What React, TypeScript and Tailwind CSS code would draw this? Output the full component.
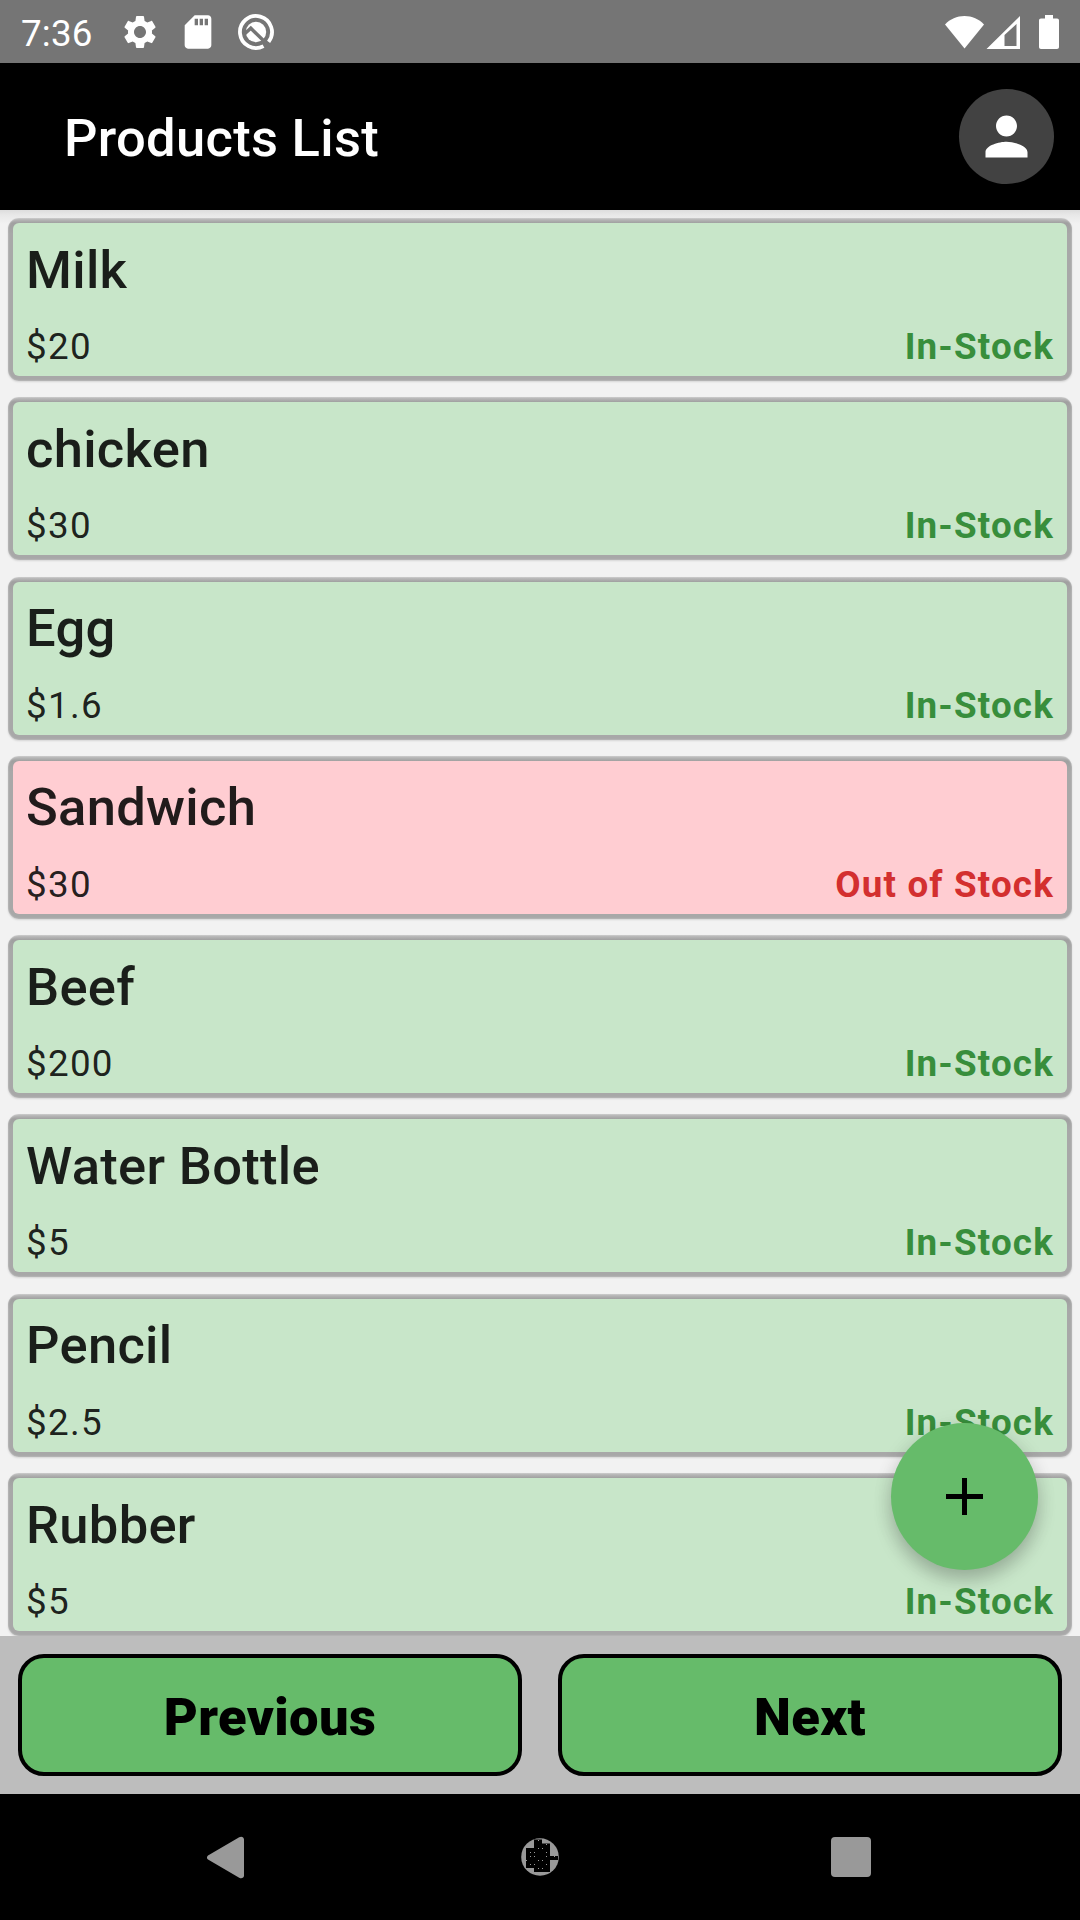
import React from "react";

type Product = { name: string; price: string; inStock: boolean };

const products: Product[] = [
  { name: "Milk", price: "$20", inStock: true },
  { name: "chicken", price: "$30", inStock: true },
  { name: "Egg", price: "$1.6", inStock: true },
  { name: "Sandwich", price: "$30", inStock: false },
  { name: "Beef", price: "$200", inStock: true },
  { name: "Water Bottle", price: "$5", inStock: true },
  { name: "Pencil", price: "$2.5", inStock: true },
  { name: "Rubber", price: "$5", inStock: true },
];

function StatusBar() {
  return (
    <div className="flex h-[63px] shrink-0 items-center bg-[#757575] text-white">
      <span className="ml-[21px] w-[99px] pt-[3px] text-[36.75px] leading-[43px] tracking-[0.2px]">7:36</span>
      <svg className="h-[40px] w-[40px]" viewBox="0 0 24 24" fill="currentColor">
        <path d="M19.14 12.94c.04-.3.06-.61.06-.94 0-.32-.02-.64-.07-.94l2.03-1.58c.18-.14.23-.41.12-.61l-1.92-3.32c-.12-.22-.37-.29-.59-.22l-2.39.96c-.5-.38-1.03-.7-1.62-.94l-.36-2.54c-.04-.24-.24-.41-.48-.41h-3.84c-.24 0-.43.17-.47.41l-.36 2.54c-.59.24-1.13.57-1.62.94l-2.39-.96c-.22-.08-.47 0-.59.22L2.74 8.87c-.12.21-.08.47.12.61l2.03 1.58c-.05.3-.09.63-.09.94s.02.64.07.94l-2.03 1.58c-.18.14-.23.41-.12.61l1.92 3.32c.12.22.37.29.59.22l2.39-.96c.5.38 1.03.7 1.62.94l.36 2.54c.05.24.24.41.48.41h3.84c.24 0 .44-.17.47-.41l.36-2.54c.59-.24 1.13-.56 1.62-.94l2.39.96c.22.08.47 0 .59-.22l1.92-3.32c.12-.22.07-.47-.12-.61l-2.01-1.58zM12 15.6c-1.98 0-3.6-1.62-3.6-3.6s1.62-3.6 3.6-3.6 3.6 1.62 3.6 3.6-1.62 3.6-3.6 3.6z" />
      </svg>
      <svg className="ml-[18px] h-[40px] w-[40px]" viewBox="0 0 24 24" fill="currentColor">
        <path d="M18 2h-8L4.02 8 4 20c0 1.1.9 2 2 2h12c1.1 0 2-.9 2-2V4c0-1.1-.9-2-2-2zm-6 6h-2V4h2v4zm3 0h-2V4h2v4zm3 0h-2V4h2v4z" />
      </svg>
      <svg className="ml-[19px] h-[38px] w-[38px]" viewBox="0 0 38 38" fill="none">
        <path d="M26.500 33.100A16 16 0 1 1 31.600 28.800" stroke="white" strokeWidth="3.8" />
        <circle cx="19" cy="19" r="10.2" fill="white" />
        <path d="M8 20.500 13.800 15.200 29 30" stroke="#757575" strokeWidth="3.4" />
      </svg>
      <div className="ml-auto mr-[20px] flex items-center">
        <svg className="h-[34px] w-[40px]" viewBox="0 0 40 34" fill="currentColor">
          <path d="M20.5 33.5 1 9.5C6 4 13 1 20.5 1S35 4 40 9.5Z" />
        </svg>
        <svg className="ml-[2px] h-[34px] w-[34px]" viewBox="0 0 34 34" fill="currentColor" fillRule="evenodd">
          <path d="M0.5 34 34 1V34ZM18.5 20V31H30.5V9Z" />
        </svg>
        <svg className="ml-[18px] h-[34px] w-[22px]" viewBox="0 0 22 34" fill="currentColor">
          <path d="M7 0h8v3.5h4c1.2 0 2 .8 2 2V32c0 1.200-.8 2-2 2H3c-1.200 0-2-.8-2-2V5.500c0-1.200.8-2 2-2h4Z" />
        </svg>
      </div>
    </div>
  );
}

function AppBar() {
  return (
    <header className="flex h-[147px] shrink-0 items-center justify-between bg-black pl-[64px] pr-[26px] text-white">
      <h1 className="pt-[3px] text-[52.5px] leading-[62px] font-medium tracking-[0.3px]">Products List</h1>
      <button className="mt-[-1px] flex h-[95px] w-[95px] items-center justify-center rounded-full bg-[#424242]">
        <svg className="h-[63px] w-[63px]" viewBox="0 0 24 24" fill="currentColor">
          <path d="M12 12c2.210 0 4-1.790 4-4s-1.790-4-4-4-4 1.790-4 4 1.790 4 4 4zm0 2c-2.670 0-8 1.340-8 4v2h16v-2c0-2.660-5.330-4-8-4z" />
        </svg>
      </button>
    </header>
  );
}

function ProductCard({ product }: { product: Product }) {
  return (
    <li className="h-[163px] shrink-0 rounded-[11px] bg-[linear-gradient(to_bottom,#c2c2c2_0px,#a0a0a0_5px,#a8a8a8_16px)] p-[5px] shadow-[inset_0_0_2px_rgba(255,255,255,0.5),0_1px_2px_rgba(0,0,0,0.12)]">
      <div
        className={
          "flex h-full flex-col justify-between rounded-[6px] px-[13px] " +
          (product.inStock ? "bg-[#c8e6c9]" : "bg-[#ffcdd2]")
        }
      >
        <h2 className="mt-[15.5px] text-[52.5px] leading-[63px] font-medium tracking-[0.3px] text-black/87">
          {product.name}
        </h2>
        <div className="mb-[7px] flex justify-between text-[36.75px] leading-[44px]">
          <span className="tracking-[1.3px] text-black/87">{product.price}</span>
          <span
            className={
              "font-bold tracking-[1.18px] " + (product.inStock ? "text-[#388e3c]" : "text-[#d32f2f]")
            }
          >
            {product.inStock ? "In-Stock" : "Out of Stock"}
          </span>
        </div>
      </div>
    </li>
  );
}

function PagerButton({ label }: { label: string }) {
  return (
    <button className="h-[122px] flex-1 rounded-[26px] border-4 border-black bg-[#66bb6a] pt-[4px] text-[52.5px] leading-[62px] font-black tracking-[0.4px] text-black">
      {label}
    </button>
  );
}

const homeSpecks = [
  [18, 2], [26, 6], [18, 10], [22, 10], [10, 14], [14, 14], [26, 14],
  [10, 18], [14, 18], [26, 18], [34, 18], [18, 22], [22, 22], [6, 22], [10, 26],
  [14, 26], [26, 26], [18, 30], [22, 30],
];

function NavigationBar() {
  return (
    <nav className="flex h-[126px] shrink-0 items-center justify-between bg-black pl-[206px] pr-[209px] text-[#999999]">
      <svg className="h-[43px] w-[39px]" viewBox="0 0 39 43" fill="currentColor">
        <path d="M2 19.400 33.200 1.300C35.500-.1 38 1.200 38 3.500V39.500C38 41.800 35.500 43.100 33.200 41.700L2 23.600C.6 22.600.6 20.400 2 19.400Z" />
      </svg>
      <svg className="ml-[4px] h-[40px] w-[40px]" viewBox="0 0 40 40">
        <circle cx="20" cy="20" r="18.800" fill="#999" />
        <path d="M14 2.500H22V6.500H30V19H38V23H30V35H14V31H6V11H14Z" fill="black" />
        {homeSpecks.map(([x, y]) => (
          <rect key={`${x}-${y}`} x={x} y={y + 1} width="1" height="1" fill="#999" />
        ))}
      </svg>
      <div className="h-[40px] w-[40px] rounded-[4px] bg-[#999]" />
    </nav>
  );
}

export default function App() {
  return (
    <div className="flex h-[1920px] w-[1080px] flex-col overflow-hidden bg-black font-['Roboto',sans-serif]">
      <StatusBar />
      <AppBar />
      <main className="relative h-[1426px] shrink-0 overflow-hidden bg-[#f2f2f2]">
        <div className="absolute inset-x-0 top-0 h-[14px] bg-[linear-gradient(to_bottom,#dddddd,#e8e8e8_5px,#f2f2f2)]" />
        <ul className="relative flex flex-col gap-[16.3px] px-[8px] pt-[8px]">
          {products.map((product) => (
            <ProductCard key={product.name} product={product} />
          ))}
        </ul>
        <button
          aria-label="Add product"
          className="absolute right-[42px] bottom-[66px] flex h-[147px] w-[147px] items-center justify-center rounded-full bg-[#66bb6a] text-black shadow-[0_10px_18px_rgba(0,0,0,0.21),0_2px_22px_rgba(0,0,0,0.07)]"
        >
          <svg className="h-[37px] w-[37px]" viewBox="0 0 37 37" fill="currentColor">
            <path d="M16 0H21V16H37V21H21V37H16V21H0V16H16Z" />
          </svg>
        </button>
      </main>
      <div className="flex h-[158px] shrink-0 gap-[36px] bg-[#bdbdbd] px-[18px] pt-[18px]">
        <PagerButton label="Previous" />
        <PagerButton label="Next" />
      </div>
      <NavigationBar />
    </div>
  );
}
